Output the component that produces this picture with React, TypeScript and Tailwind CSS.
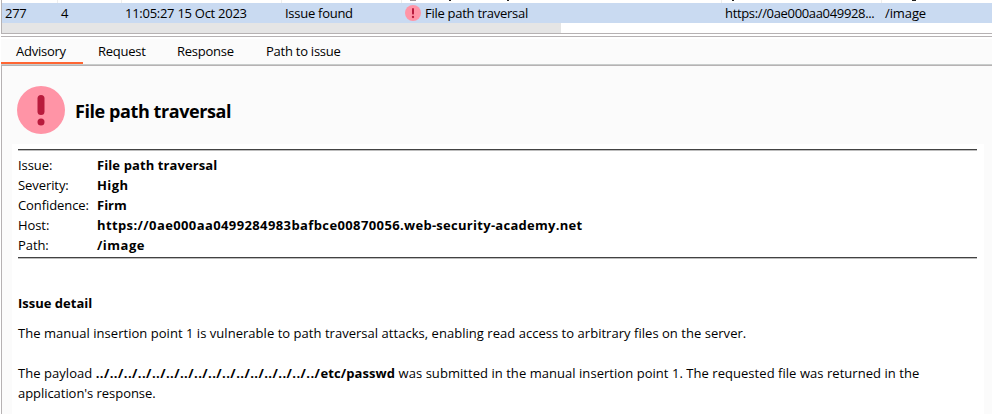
import type { ReactNode } from "react";

function Alert({ size, small }: { size: number; small?: boolean }) {
  return (
    <svg width={size} height={size} viewBox="0 0 48 48" className="block shrink-0">
      <circle cx="24" cy="24" r="24" fill="#ff94a6" />
      <rect x={small ? 21 : 20.5} y="9" width={small ? 6 : 7} height="20" rx="3.5" fill="#b81b3c" />
      <circle cx="24" cy="36" r="3.5" fill="#b81b3c" />
    </svg>
  );
}

function Rule() {
  return <div className="h-[2px] w-[959px] border-t border-b border-t-[#424242] border-b-[#bdbdbd]" />;
}

function Row({ label, children }: { label: string; children: ReactNode }) {
  return (
    <div className="flex h-5">
      <span className="w-[79px] tracking-[-0.08px]">{label}</span>
      <b>{children}</b>
    </div>
  );
}

export default function App() {
  return (
    <div className="h-[414px] w-[992px] overflow-hidden bg-white font-['Open_Sans','Noto_Sans',sans-serif] text-[13px] leading-5 whitespace-nowrap text-black">
      <div className="ml-px h-[34px] border-b border-l border-[#b6b2b3] tracking-[-0.27px]">
        {/* bottom edge of the row scrolled out above */}
        <div className="flex h-[3px]">
          <i className="w-[56px] border-r border-[#eeeeee]" />
          <i className="w-[64px] border-r border-[#eeeeee]" />
          <i className="w-[160px] border-r border-[#eeeeee]" />
          <i className="w-[120px] border-r border-[#eeeeee]" />
          <span className="flex w-[320px] border-r border-[#eeeeee]">
            <i className="ml-[8px] h-px w-[6px] bg-[#9a9698]" />
            <i className="ml-[33px] h-px w-[2px] bg-[#222222]" />
            <i className="ml-[56px] h-px w-[2px] bg-[#222222]" />
          </span>
          <span className="flex w-[160px] border-r border-[#eeeeee]">
            <i className="ml-[10px] h-px w-[2px] bg-[#222222]" />
          </span>
          <i className="ml-[30px] h-px w-[4px] bg-[#222222]" />
        </div>
        <div className="flex h-5 bg-[#c9daf1]">
          <span className="ml-[3px] w-[56px]">277</span>
          <span className="w-[64px]">4</span>
          <span className="w-[160px]">11:05:27 15 Oct 2023</span>
          <span className="w-[120px]">Issue found</span>
          <span className="mt-[2px] mr-1"><Alert size={16} small /></span>
          <span className="w-[300px]">File path traversal</span>
          <span className="w-[160px] tracking-[-0.34px]">https://0ae000aa049928...</span>
          <span className="tracking-[-0.1px]">/image</span>
        </div>
        <div className="h-[10px] w-[559px] bg-[#e5e5e5]" />
      </div>
      <div className="mt-[2px] ml-px h-px bg-[#b6b2b3]" />
      <div className="mt-[2px] ml-px flex h-[26px] border-b border-[#c8cccb] bg-[#fbfbfb] leading-[25px] tracking-[-0.25px]">
        <div className="h-[25px] w-[82px] border-b-2 border-[#ff6633] pl-[15px]">Advisory</div>
        <div className="ml-[15px] w-[79px]">Request</div>
        <div className="w-[89px]">Response</div>
        <div>Path to issue</div>
      </div>
      <div className="ml-px h-[349px] border-t border-l border-[#b6b2b3] bg-[#fbfbfb]">
        <div className="flex h-[78px] pt-[20px] pl-[15px]">
          <Alert size={48} />
          <h1 className="ml-[10px] text-[18px] leading-[50px] font-bold tracking-[-0.42px]">File path traversal</h1>
        </div>
        <div className="ml-[10px] h-[271px] w-[972px] bg-white pt-[5px] pl-[6px]">
          <Rule />
          <div className="mt-[4px] mb-[2px]">
            <Row label="Issue:"><span className="tracking-[0.1px]">File path traversal</span></Row>
            <Row label="Severity:"><span className="tracking-[0.4px]">High</span></Row>
            <Row label="Confidence:">Firm</Row>
            <Row label="Host:"><span className="tracking-[0.39px]">https://0ae000aa0499284983bafbce00870056</span><span className="tracking-[0.28px]">.web-security-academy.net</span></Row>
            <Row label="Path:"><span className="tracking-[0.5px]">/image</span></Row>
          </div>
          <Rule />
          <h2 className="mt-[34px] font-bold">Issue detail</h2>
          <p className="mt-[10px] tracking-[0.033px]">The manual insertion point 1 is vulnerable to path traversal attacks, enabling read access to arbitrary files on the server.</p>
          <p className="mt-5 tracking-[0.045px]">The payload <b><span className="tracking-[0.42px]">../../../../../../../../../../../../../../../../</span><span className="tracking-[0.1px]">etc/passwd</span></b> was submitted in the manual insertion point 1. The requested file was returned in the</p>
          <p className="tracking-[-0.05px]">application's response.</p>
        </div>
      </div>
    </div>
  );
}
